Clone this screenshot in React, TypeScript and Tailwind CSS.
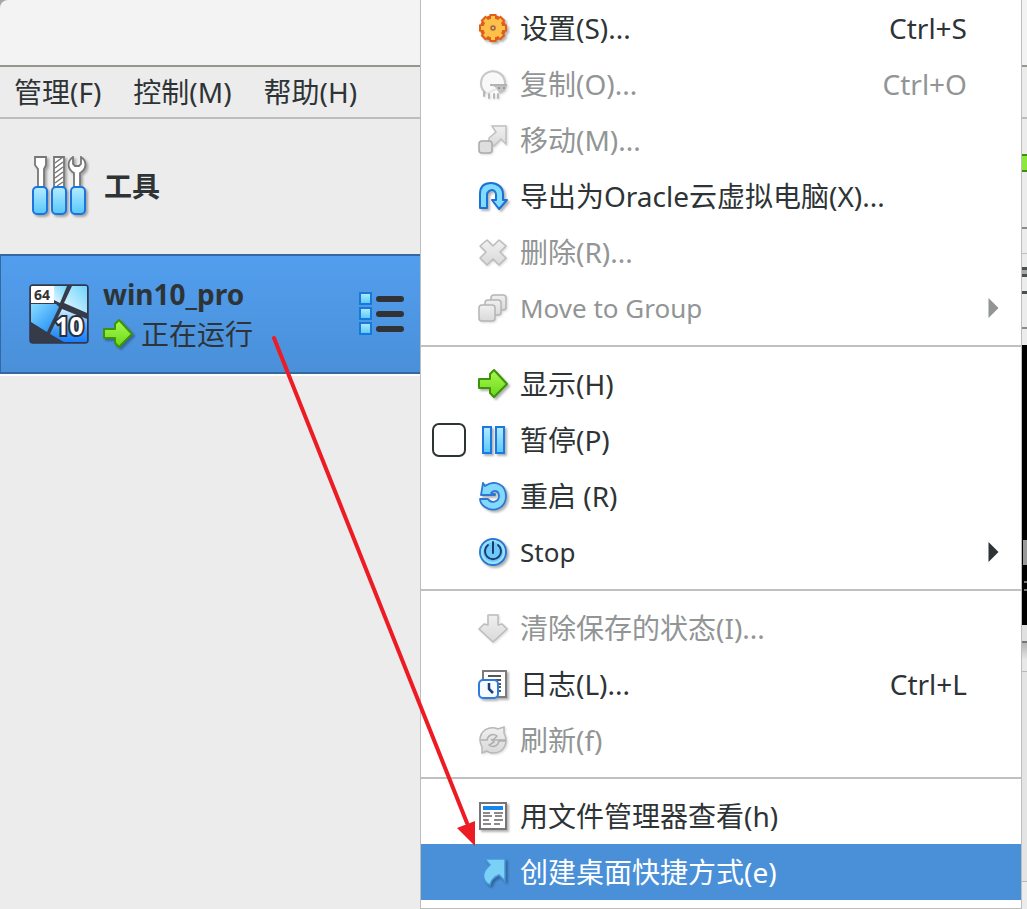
import type { ReactNode } from "react";

type MenuEntry = {
	label: string;
	icon: ReactNode;
	shortcut?: string;
	disabled?: boolean;
	submenu?: boolean;
	checkable?: boolean;
	active?: boolean;
	latin?: boolean;
};

const SHADOW = "drop-shadow-[2px_2px_1px_rgba(0,0,0,0.3)]";

function Icon({ children, soft }: { children: ReactNode; soft?: boolean }) {
	return (
		<svg
			viewBox="0 0 30 30"
			aria-hidden="true"
			className={`size-[30px] shrink-0 overflow-visible ${soft ? "drop-shadow-[1px_1px_1px_rgba(0,0,0,0.15)]" : SHADOW}`}
		>
			{children}
		</svg>
	);
}

function GradientDefs() {
	return (
		<svg aria-hidden="true" className="absolute size-0">
			<defs>
				<linearGradient id="blue" x1="0" y1="0" x2="0" y2="1">
					<stop offset="0" stopColor="#b5ecff" />
					<stop offset="1" stopColor="#55c8fa" />
				</linearGradient>
				<linearGradient id="green" x1="0" y1="0" x2="0" y2="1">
					<stop offset="0" stopColor="#a9f94e" />
					<stop offset="1" stopColor="#6ad91c" />
				</linearGradient>
				<linearGradient id="gray" x1="0" y1="0" x2="0" y2="1">
					<stop offset="0" stopColor="#f0f0f0" />
					<stop offset="1" stopColor="#d9d9d9" />
				</linearGradient>
				<linearGradient id="pane" x1="0" y1="0" x2="1" y2="1">
					<stop offset="0" stopColor="#8bdcff" />
					<stop offset="1" stopColor="#1687f5" />
				</linearGradient>
				<linearGradient id="paneLight" x1="1" y1="0" x2="0" y2="1">
					<stop offset="0" stopColor="#6fd3fc" />
					<stop offset="1" stopColor="#e6faff" />
				</linearGradient>
				<linearGradient id="paneDeep" x1="0" y1="0" x2="0" y2="1">
					<stop offset="0" stopColor="#d4f3ff" />
					<stop offset="0.6" stopColor="#3f9dfc" />
					<stop offset="1" stopColor="#1a7dfb" />
				</linearGradient>
			</defs>
		</svg>
	);
}

function GearIcon() {
	return (
		<Icon>
			<circle cx="15" cy="15" r="13" fill="#e25d16" />
			<path
				d="M15 1v28M1 15h28M5 5l20 20M25 5L5 25"
				stroke="#e25d16"
				strokeWidth="7"
			/>
			<circle cx="15" cy="15" r="9.500" fill="#fdc04a" />
			<path
				d="M15 3v24M3 15h24M6.500 6.500l17 17M23.500 6.500l-17 17"
				stroke="#fdc04a"
				strokeWidth="4"
			/>
			<circle cx="15" cy="15" r="2" fill="#f9b55b" stroke="#9a6440" strokeWidth="1.500" />
		</Icon>
	);
}

function CloneIcon() {
	return (
		<Icon soft>
			<path
				d="M8 24A12 12 0 1 1 27 15"
				fill="#f8f8f8"
				stroke="#c6c6c6"
				strokeWidth="2"
			/>
			<path d="M14 16l13 0 2 1-2 5-5 3-4-6z" fill="#c2c2c2" />
			<path d="M12 16h17" stroke="#b3b3b3" strokeWidth="2" />
			<path d="M20 19h2M25 19h2" stroke="#888" strokeWidth="1.500" />
			<path
				d="M6 23v4M11 25v4M16 25v4M20 25v4"
				stroke="#b8b8b8"
				strokeWidth="2"
				strokeLinecap="round"
			/>
		</Icon>
	);
}

function MoveIcon() {
	return (
		<Icon soft>
			<path
				d="M14 1h14v18l-5-5-7 7-5-5v-3l7-6z"
				fill="url(#gray)"
				stroke="#c0c0c0"
				strokeWidth="1.500"
			/>
			<rect
				x="1"
				y="16"
				width="13"
				height="12"
				rx="3"
				fill="#dedede"
				stroke="#aaa"
				strokeWidth="1.500"
			/>
		</Icon>
	);
}

function ExportIcon() {
	return (
		<Icon>
			<path
				d="M2 27V13C2 5 7 2 13 2s12 4 12 11v6h4l-8 9-7-9h4v-5c0-3-2-5-4-5s-5 2-5 5v13z"
				fill="#7fdcff"
				stroke="#1c70d8"
				strokeWidth="2"
				strokeLinejoin="round"
			/>
		</Icon>
	);
}

function RemoveIcon() {
	return (
		<Icon soft>
			<path
				d="M9 3l6 6 6-6 7 6-6 6 6 6-7 7-6-6-6 6-7-7 6-6-6-6z"
				fill="url(#gray)"
				stroke="#bcbcbc"
				strokeWidth="1.500"
				strokeLinejoin="round"
			/>
		</Icon>
	);
}

function GroupIcon() {
	return (
		<Icon soft>
			<g fill="url(#gray)" stroke="#b5b5b5" strokeWidth="1.500">
				<rect x="13" y="2" width="15" height="15" rx="3" />
				<rect x="7" y="7" width="16" height="15" rx="3" />
				<rect x="1" y="12" width="16" height="16" rx="3" />
			</g>
		</Icon>
	);
}

function ShowIcon() {
	return (
		<Icon>
			<path
				d="M1 10h11V5l4-4 13 14-13 13-4-4v-5H1z"
				fill="url(#green)"
				stroke="#3f9308"
				strokeWidth="2"
				strokeLinejoin="round"
			/>
		</Icon>
	);
}

function PauseIcon() {
	return (
		<Icon>
			<g fill="url(#blue)" stroke="#1c78e0" strokeWidth="2">
				<rect x="5" y="2" width="8" height="26" />
				<rect x="18" y="2" width="8" height="26" />
			</g>
		</Icon>
	);
}

function ResetIcon() {
	return (
		<Icon>
			<path
				d="M5 2l2 3C17-2 28 4 28 15c0 12-12 17-21 11-3-2-5-5-5-8h8c3 5 11 3 11-3 0-5-5-7-8-3l4 1v1H3z"
				fill="#83d8fb"
				stroke="#2b78d2"
				strokeWidth="1.800"
				strokeLinejoin="round"
			/>
		</Icon>
	);
}

function PowerIcon() {
	return (
		<Icon>
			<circle cx="15" cy="15" r="13" fill="#6cc9fa" stroke="#2b78d2" strokeWidth="2" />
			<circle cx="15" cy="15" r="11" fill="none" stroke="#9be0fd" strokeWidth="2" />
			<path
				d="M15 5v11M10 8a8 8 0 1 0 10 0"
				fill="none"
				stroke="#1b3a6e"
				strokeWidth="2"
				strokeLinecap="round"
			/>
		</Icon>
	);
}

function DiscardIcon() {
	return (
		<Icon soft>
			<path
				d="M10 2h10v10l4-1 5 5-14 13L1 16l5-5 4 1z"
				fill="url(#gray)"
				stroke="#bcbcbc"
				strokeWidth="1.500"
				strokeLinejoin="round"
			/>
		</Icon>
	);
}

function LogIcon() {
	return (
		<Icon>
			<rect x="5" y="2" width="23" height="26" fill="#fff" stroke="#7b7b7b" strokeWidth="2" />
			<path d="M10 7h13M15 11h8M19 15h4M21 18h2M21 22h2" stroke="#555" strokeWidth="2" />
			<rect
				x="1"
				y="11"
				width="19"
				height="18"
				rx="4"
				fill="#f5fbff"
				stroke="#2b7de0"
				strokeWidth="2"
			/>
			<path d="M11 14v6l4 4" fill="none" stroke="#1c3d78" strokeWidth="2.500" />
		</Icon>
	);
}

function RefreshIcon() {
	return (
		<Icon soft>
			<path
				d="M2 15C2 6 11 0 20 4l6-2v6c5 10 0 20-11 20-3 0-5-1-6-2l-5 2v-6c-1-2-2-4-2-7z"
				fill="url(#gray)"
				stroke="#b8b8b8"
				strokeWidth="1.500"
			/>
			<path
				d="M3 15h6c1-5 6-7 10-4l-4 4h13M28 16h-7c-1 5-6 7-10 4l5-3-3-3"
				fill="none"
				stroke="#b0b0b0"
				strokeWidth="1.500"
			/>
		</Icon>
	);
}

function FileManagerIcon() {
	return (
		<Icon>
			<rect x="2" y="2" width="26" height="26" fill="#fff" stroke="#767676" strokeWidth="2" />
			<path d="M5 7h20" stroke="#1686ea" strokeWidth="4" />
			<path
				d="M5 12h7M16 12h9M5 15h9M17 15h7M5 19h6M16 19h9M5 23h8M16 23h6"
				stroke="#666"
				strokeWidth="1.600"
			/>
		</Icon>
	);
}

function ShortcutIcon() {
	return (
		<Icon>
			<path
				d="M7 2h20v22l-6-6c-5 2-8 5-9 10C5 25 2 16 12 8z"
				fill="#7bd0f5"
				stroke="#4595dc"
				strokeWidth="1.500"
			/>
		</Icon>
	);
}

const sections: MenuEntry[][] = [
	[
		{ label: "设置(S)...", icon: <GearIcon />, shortcut: "Ctrl+S" },
		{ label: "复制(O)...", icon: <CloneIcon />, shortcut: "Ctrl+O", disabled: true },
		{ label: "移动(M)...", icon: <MoveIcon />, disabled: true },
		{ label: "导出为Oracle云虚拟电脑(X)...", icon: <ExportIcon /> },
		{ label: "删除(R)...", icon: <RemoveIcon />, disabled: true },
		{
			label: "Move to Group",
			icon: <GroupIcon />,
			disabled: true,
			submenu: true,
			latin: true,
		},
	],
	[
		{ label: "显示(H)", icon: <ShowIcon /> },
		{ label: "暂停(P)", icon: <PauseIcon />, checkable: true },
		{ label: "重启 (R)", icon: <ResetIcon /> },
		{ label: "Stop", icon: <PowerIcon />, submenu: true, latin: true },
	],
	[
		{ label: "清除保存的状态(I)...", icon: <DiscardIcon />, disabled: true },
		{ label: "日志(L)...", icon: <LogIcon />, shortcut: "Ctrl+L" },
		{ label: "刷新(f)", icon: <RefreshIcon />, disabled: true },
	],
	[
		{ label: "用文件管理器查看(h)", icon: <FileManagerIcon /> },
		{ label: "创建桌面快捷方式(e)", icon: <ShortcutIcon />, active: true },
	],
];

function MenuRow({ entry }: { entry: MenuEntry }) {
	const color = entry.active
		? "bg-[#4a90d9] text-white"
		: entry.disabled
			? "text-[#929595]"
			: "text-[#2e3436]";

	return (
		<div className={`flex h-14 items-center pr-[54px] pl-[11px] ${color}`}>
			<div className="flex w-[46px] shrink-0 items-center">
				{entry.checkable && (
					<input
						type="checkbox"
						aria-label={entry.label}
						className="size-[34px] appearance-none rounded-[7px] border-2 border-[#2e3436] bg-white"
					/>
				)}
			</div>
			<button
				type="button"
				disabled={entry.disabled}
				className="flex h-full min-w-0 flex-1 items-center text-left whitespace-nowrap"
			>
				{entry.icon}
				<span className={`ml-3 flex-1 ${entry.latin ? "text-[26px]" : ""}`}>
					{entry.label}
				</span>
				{entry.shortcut && <span>{entry.shortcut}</span>}
				{entry.submenu && (
					<svg viewBox="0 0 10 20" aria-hidden="true" className="-mr-8 h-5 w-[11px]">
						<path d="M0 0l10 10L0 20z" fill="currentColor" />
					</svg>
				)}
			</button>
		</div>
	);
}

function ToolsIcon() {
	return (
		<svg viewBox="0 0 58 60" aria-hidden="true" className={`h-[60px] w-[58px] ${SHADOW}`}>
			<g fill="#fff" stroke="#777" strokeWidth="1.800">
				<path d="M3 1h11v8l-2 4v18H6V13L3 9z" />
				<path d="M22 1h10v30H22z" />
				<path d="M41 1c-6 4-6 12 1 16v14h6V17c7-4 7-12 1-16v7l-2 2h-4l-2-2z" />
			</g>
			<path
				d="M23 7l8-6M23 12l8-6M23 17l8-6M23 22l8-6M23 27l8-6M25 30l6-4"
				stroke="#777"
				strokeWidth="1.500"
			/>
			<g fill="url(#blue)" stroke="#1c74de" strokeWidth="2">
				<rect x="1" y="31" width="14" height="27" rx="4" />
				<rect x="20" y="31" width="14" height="27" rx="4" />
				<rect x="39" y="31" width="14" height="27" rx="4" />
			</g>
		</svg>
	);
}

function WindowsIcon() {
	return (
		<svg viewBox="0 0 60 60" aria-hidden="true" className="size-[60px] shrink-0">
			<rect x="1" y="1" width="58" height="58" rx="3" fill="#363b4a" />
			<path d="M25 2h13l-7 17-6-3z" fill="url(#paneLight)" />
			<path d="M43 2h15v27L35 19z" fill="url(#paneLight)" />
			<path d="M2 20h25l3 3-12 25L2 38z" fill="url(#pane)" />
			<path d="M33 25l25 10v23H35L21 50z" fill="url(#paneDeep)" />
			<rect x="2" y="2" width="23" height="17" fill="#fff" />
			<text x="5" y="16" fontSize="14" fontWeight="700" fill="#333" fontFamily="Noto Sans">
				64
			</text>
			<text
				x="26"
				y="51"
				fontSize="25"
				fontWeight="700"
				fill="#fff"
				stroke="#2c2f38"
				strokeWidth="4"
				paintOrder="stroke"
				fontFamily="Noto Sans"
			>
				10
			</text>
			<rect
				x="1"
				y="1"
				width="58"
				height="58"
				rx="3"
				fill="none"
				stroke="#30384d"
				strokeWidth="1.500"
			/>
		</svg>
	);
}

function DetailsIcon() {
	return (
		<svg viewBox="0 0 46 44" aria-hidden="true" className="h-11 w-[46px]">
			<g fill="url(#blue)" stroke="#1779dc" strokeWidth="2">
				<rect x="1" y="1" width="11" height="11" />
				<rect x="1" y="16" width="11" height="11" />
				<rect x="1" y="31" width="11" height="11" />
			</g>
			<path
				d="M20 7h22M20 22h22M20 37h22"
				stroke="#303236"
				strokeWidth="6"
				strokeLinecap="round"
			/>
		</svg>
	);
}

function Sidebar() {
	return (
		<aside className="flex w-[421px] shrink-0 flex-col">
			<button type="button" className="flex h-[135px] items-center pb-0.5 pl-8 font-bold">
				<ToolsIcon />
				<span className="ml-[14px]">工具</span>
			</button>
			<div className="flex h-[120px] items-center border-[#3468a0] border-y-2 border-l bg-linear-to-b from-[#529eee] to-[#4a90d9] pr-4 pl-7">
				<WindowsIcon />
				<div className="ml-[14px] flex-1">
					<div className="font-bold leading-10">win10_pro</div>
					<div className="flex items-center leading-10">
						<ShowIcon />
						<span className="ml-2">正在运行</span>
					</div>
				</div>
				<button type="button" aria-label="详情">
					<DetailsIcon />
				</button>
			</div>
			<div className="border-white border-t-2" />
		</aside>
	);
}

function DetailsPane() {
	return (
		<main className="flex flex-1 flex-col">
			<div className="flex h-[135px] flex-col items-end border-[#c0c0c0] border-b pt-[35px]">
				<div className="h-[18px] w-6 border-[#428c12] border-y-2 bg-[#8ce83b]" />
				<div className="mt-[55px] h-0.5 w-1.5 bg-[#8a8a8a]" />
			</div>
			<div className="flex h-[75px] flex-col items-end border-[#8a8a8a] border-b-2 pt-[13px]">
				<div className="h-[10px] w-1.5 border-[#4a4f50] border-y-3 bg-[#aaa]" />
				<div className="mt-[14px] h-[3px] w-1.5 bg-[#4a4f50]" />
			</div>
			<div className="h-4" />
			<div className="flex h-[280px] flex-col items-end bg-black pt-[195px]">
				<div className="h-[25px] w-1 bg-[#999]" />
				<div className="mt-4 h-[10px] w-[3px] border-[#777] border-y-2" />
			</div>
			<div className="h-[18px] border-[#777] border-b-2 bg-[#e0e0e0]" />
			<div className="h-[29px] border-[#b8b8b8] border-b bg-linear-to-b from-[#b5b5b5] to-[#e8e8e8] to-60%" />
			<div className="h-[210px] border-[#b8b8b8] border-b bg-[#e4e4e4]" />
		</main>
	);
}

export default function App() {
	return (
		<div className="relative flex h-screen flex-col overflow-hidden bg-[#ececec] text-[#2e3436] text-[28px] leading-9 font-['Noto_Sans','Noto_Sans_CJK_SC',sans-serif]">
			<GradientDefs />
			<header className="shrink-0 bg-[#9faaa5]">
				<div className="h-[67px] rounded-tl-lg border-[#96968e] border-b-2 bg-[#f3f3f3]" />
			</header>
			<nav className="flex h-[52px] shrink-0 items-center gap-8 border-[#bdbdbd] border-b-2 pl-[14px]">
				<button type="button">管理(F)</button>
				<button type="button">控制(M)</button>
				<button type="button">帮助(H)</button>
			</nav>
			<div className="flex flex-1">
				<Sidebar />
				<DetailsPane />
			</div>

			{/* Context menu */}
			<div className="absolute top-0 right-[5px] left-[420px] border-[#bdbdbd] border-x border-b bg-white pb-2">
				{sections.map((section, i) => (
					<div key={section[0].label}>
						{i > 0 && (
							<div className="flex h-5 items-center">
								<hr className="w-full border-[#c0c0c0] border-t-2" />
							</div>
						)}
						{section.map((entry) => (
							<MenuRow key={entry.label} entry={entry} />
						))}
					</div>
				))}
			</div>

			{/* Red pointer from the machine to the shortcut action */}
			<svg
				viewBox="0 0 205 512"
				aria-hidden="true"
				className="pointer-events-none absolute top-[335px] left-[272px] h-[512px] w-[205px]"
			>
				<path d="M2 3l193 485" stroke="#ed1c24" strokeWidth="4" strokeLinecap="round" />
				<path d="M185 493l18-7v25z" fill="#ed1c24" />
			</svg>
		</div>
	);
}
